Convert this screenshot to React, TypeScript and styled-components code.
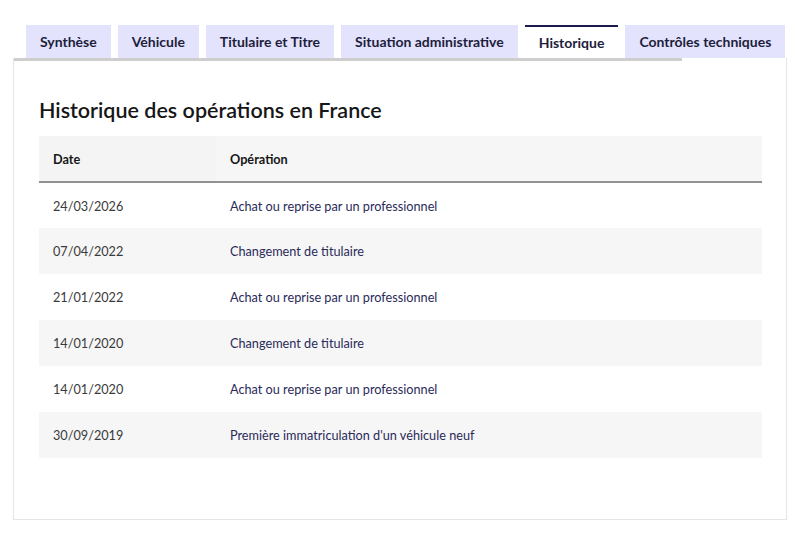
import styled, { createGlobalStyle } from "styled-components";

const GlobalStyle = createGlobalStyle`
  body {
    margin: 0;
    background: #ffffff;
    font-family: Lato, "Noto Sans", sans-serif;
  }
`;

const tabs = [
  "Synthèse",
  "Véhicule",
  "Titulaire et Titre",
  "Situation administrative",
  "Historique",
  "Contrôles techniques",
];

const operations = [
  { date: "24/03/2026", label: "Achat ou reprise par un professionnel" },
  { date: "07/04/2022", label: "Changement de titulaire" },
  { date: "21/01/2022", label: "Achat ou reprise par un professionnel" },
  { date: "14/01/2020", label: "Changement de titulaire" },
  { date: "14/01/2020", label: "Achat ou reprise par un professionnel" },
  { date: "30/09/2019", label: "Première immatriculation d'un véhicule neuf" },
];

function App() {
  return (
    <>
      <GlobalStyle />
      <Page>
        <TabList>
          {tabs.map((tab) => (
            <Tab key={tab} $active={tab === "Historique"}>
              {tab}
            </Tab>
          ))}
        </TabList>
        <TabBar />
        <Panel>
          <Title>Historique des opérations en France</Title>
          <Table>
            <thead>
              <tr>
                <HeadCell $first>Date</HeadCell>
                <HeadCell>Opération</HeadCell>
              </tr>
            </thead>
            <tbody>
              {operations.map((op, i) => (
                <Row key={i} $striped={i % 2 === 1}>
                  <DateCell>{op.date}</DateCell>
                  <OpCell>{op.label}</OpCell>
                </Row>
              ))}
            </tbody>
          </Table>
        </Panel>
      </Page>
    </>
  );
}

export default App;

const Page = styled.div`
  width: 774px;
  padding: 25px 0 0 13px;
`;

const TabList = styled.div`
  display: flex;
  gap: 7px;
  padding-left: 13px;
  height: 33px;
`;

const Tab = styled.div<{ $active?: boolean }>`
  display: flex;
  align-items: center;
  padding: 0 14px;
  font-size: 14px;
  font-weight: 700;
  color: #1e1e3c;
  background: ${(p) => (p.$active ? "#ffffff" : "#e3e3fd")};
  border-top: ${(p) => (p.$active ? "2px solid #1b1b4d" : "none")};
  box-sizing: border-box;
  white-space: nowrap;
`;

const TabBar = styled.div`
  width: 669px;
  height: 3px;
  background: #cecece;
`;

const Panel = styled.div`
  border: 1px solid #e5e5e5;
  border-top: none;
  margin-top: -3px;
  padding: 38px 24px 61px 25px;
`;

const Title = styled.h2`
  margin: 0 0 12px;
  font-size: 21.5px;
  line-height: 28px;
  font-weight: 600;
  color: #161616;
`;

const Table = styled.table`
  width: 100%;
  border-collapse: collapse;
  font-size: 12.7px;
`;

const HeadCell = styled.th<{ $first?: boolean }>`
  width: ${(p) => (p.$first ? "149px" : "auto")};
  height: 45px;
  padding: 0 14px;
  text-align: left;
  font-weight: 700;
  color: #161616;
  background: ${(p) => (p.$first ? "#f4f4f4" : "#f6f6f6")};
  border-bottom: 2px solid #929292;
`;

const Row = styled.tr<{ $striped?: boolean }>`
  height: 46px;
  background: ${(p) => (p.$striped ? "#f6f6f6" : "#ffffff")};
`;

const DateCell = styled.td`
  padding: 0 14px;
  color: #3a3a3a;
`;

const OpCell = styled.td`
  padding: 0 14px;
  color: #2a2a5a;
`;
